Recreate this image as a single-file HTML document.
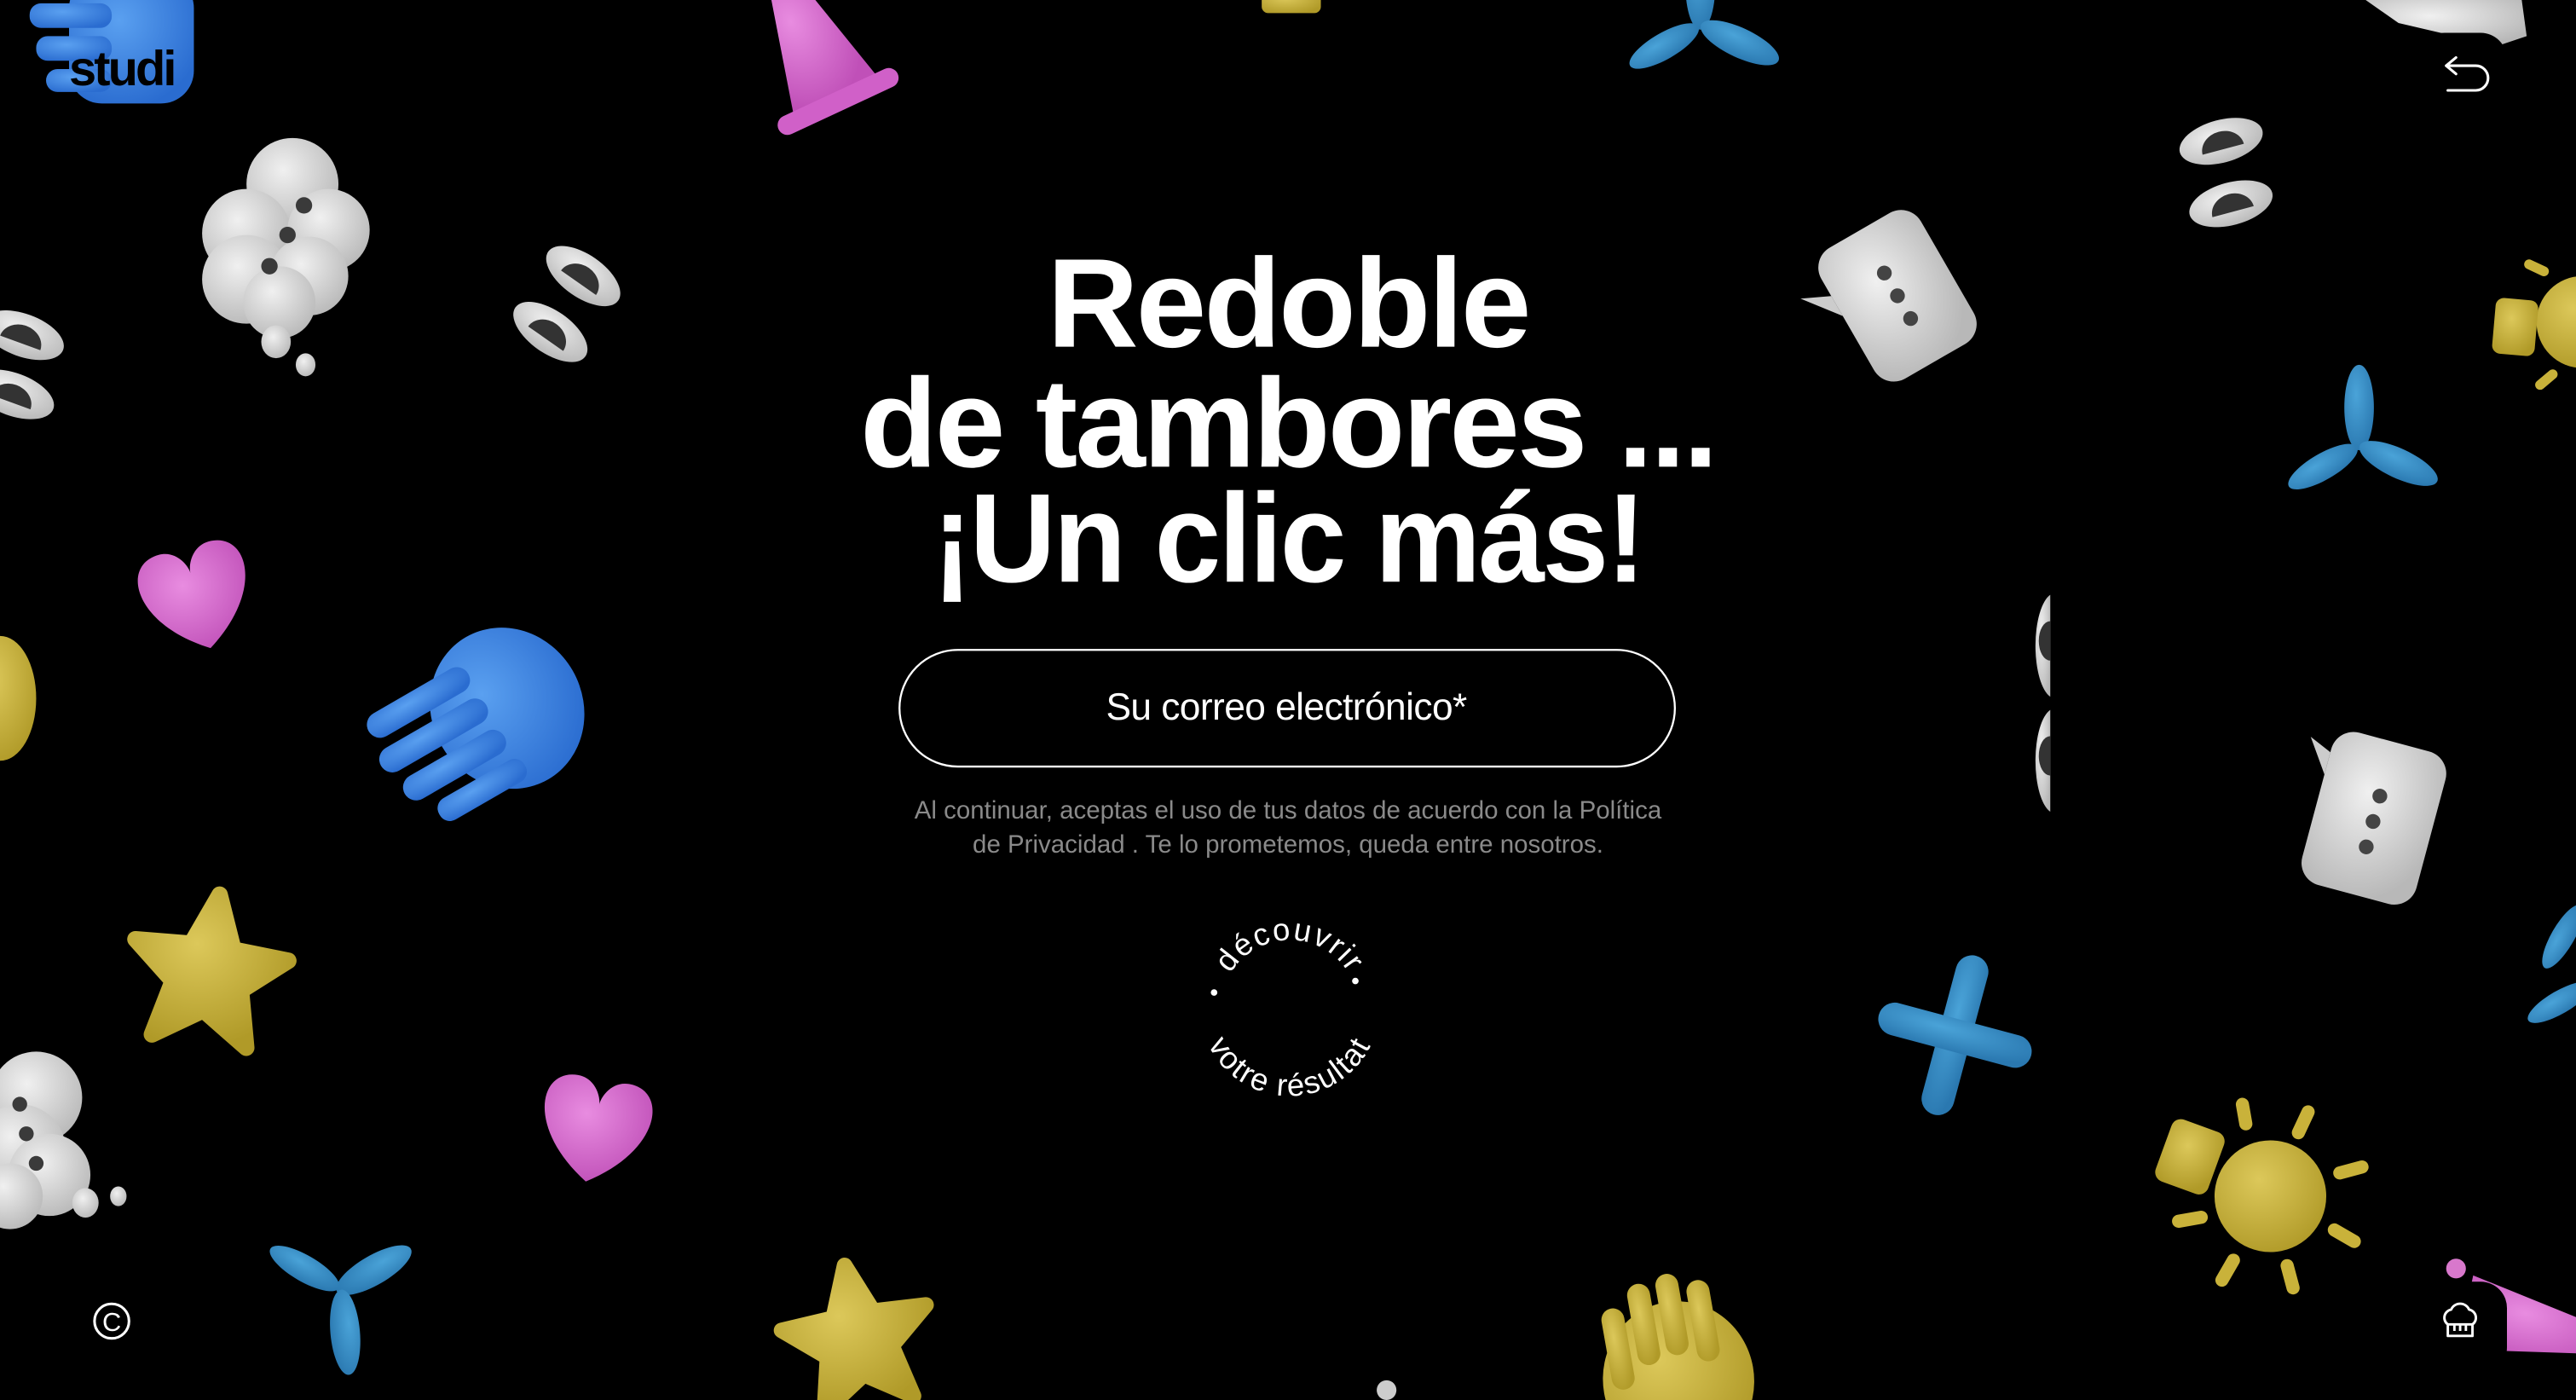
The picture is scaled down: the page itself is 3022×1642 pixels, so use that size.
<!DOCTYPE html>
<html><head><meta charset="utf-8"><style>
html,body{margin:0;padding:0;background:#000;overflow:hidden;width:3022px;height:1642px}
svg{display:block;overflow:hidden}
</style></head><body>
<svg width="3022" height="1642" viewBox="0 0 1568 852" overflow="hidden" xmlns="http://www.w3.org/2000/svg">
<defs>
<radialGradient id="w" cx="40%" cy="35%" r="70%"><stop offset="0" stop-color="#f0f0f0"/><stop offset="1" stop-color="#b8b8b8"/></radialGradient>
<radialGradient id="b" cx="40%" cy="35%" r="70%"><stop offset="0" stop-color="#5aa0f0"/><stop offset="1" stop-color="#2a6cd0"/></radialGradient>
<radialGradient id="t" cx="40%" cy="35%" r="70%"><stop offset="0" stop-color="#4aa3d8"/><stop offset="1" stop-color="#2a78b0"/></radialGradient>
<radialGradient id="p" cx="40%" cy="35%" r="70%"><stop offset="0" stop-color="#e88ce0"/><stop offset="1" stop-color="#c050b8"/></radialGradient>
<radialGradient id="y" cx="40%" cy="35%" r="70%"><stop offset="0" stop-color="#dcc85a"/><stop offset="1" stop-color="#b09a28"/></radialGradient>
<g id="eye"><ellipse rx="26" ry="13" fill="url(#w)"/><path d="M-13,5 a13 11 0 0 1 26 0 z" fill="#333"/></g>
<g id="heart"><path d="M0,30 C-40,5 -38,-30 -15,-30 C-5,-30 0,-20 0,-15 C0,-20 5,-30 15,-30 C38,-30 40,5 0,30 Z" fill="url(#p)"/></g>
<g id="star"><path d="M0,-48 L13,-16 L47,-14 L21,8 L29,42 L0,23 L-29,42 L-21,8 L-47,-14 L-13,-16 Z" fill="url(#y)" stroke="url(#y)" stroke-width="10" stroke-linejoin="round"/></g>
<g id="sprout" fill="url(#t)"><ellipse cx="0" cy="-26" rx="9" ry="26"/><ellipse cx="24" cy="8" rx="26" ry="9" transform="rotate(25 24 8)"/><ellipse cx="-22" cy="10" rx="24" ry="8" transform="rotate(-30 -22 10)"/></g>
</defs>
<rect width="1568" height="852" fill="#000"/>

<g fill="url(#b)"><rect x="42" y="-15" width="76" height="78" rx="20"/><rect x="18" y="2" width="50" height="15" rx="7"/><rect x="22" y="22" width="46" height="15" rx="7"/><rect x="28" y="42" width="40" height="14" rx="7"/></g>
<text x="42" y="52" font-family="Liberation Sans, sans-serif" font-weight="bold" font-size="30" letter-spacing="-1.5" fill="#000">studi</text>

<g transform="translate(500,40) rotate(-25)"><path d="M-8,-60 L8,-60 L28,20 L-28,20 Z" fill="url(#p)"/><rect x="-40" y="18" width="80" height="12" rx="6" fill="#d060c8"/></g>
<rect x="768" y="-6" width="36" height="14" rx="4" fill="url(#y)"/>
<g transform="translate(1035,18)"><use href="#sprout"/></g>

<g fill="url(#w)"><circle cx="178" cy="112" r="28"/><circle cx="150" cy="142" r="27"/><circle cx="200" cy="140" r="25"/><circle cx="150" cy="170" r="27"/><circle cx="188" cy="168" r="24"/><circle cx="170" cy="184" r="22"/><ellipse cx="168" cy="208" rx="9" ry="10"/><ellipse cx="186" cy="222" rx="6" ry="7"/></g>
<g fill="#3a3a3a"><circle cx="185" cy="125" r="5"/><circle cx="175" cy="143" r="5"/><circle cx="164" cy="162" r="5"/></g>

<use href="#eye" transform="translate(355,168) rotate(35)"/>
<use href="#eye" transform="translate(335,202) rotate(35)"/>
<use href="#eye" transform="translate(14,204) rotate(20)"/>
<use href="#eye" transform="translate(8,240) rotate(20)"/>
<use href="#eye" transform="translate(1352,86) rotate(-15)"/>
<use href="#eye" transform="translate(1358,124) rotate(-15)"/>

<g transform="translate(1155,180) rotate(-30)"><rect x="-35" y="-46" width="70" height="92" rx="14" fill="url(#w)"/><path d="M-35,-20 L-52,-28 L-35,-6 Z" fill="#ccc"/><g fill="#444"><circle cx="0" cy="-16" r="4.5"/><circle cx="0" cy="0" r="4.5"/><circle cx="0" cy="16" r="4.5"/></g></g>
<g transform="translate(1445,498) rotate(15)"><rect x="-36" y="-48" width="72" height="96" rx="14" fill="url(#w)"/><path d="M-36,-32 L-50,-38 L-36,-18 Z" fill="#ccc"/><g fill="#444"><circle cx="0" cy="-14" r="4.5"/><circle cx="0" cy="2" r="4.5"/><circle cx="0" cy="18" r="4.5"/></g></g>

<circle cx="1572" cy="196" r="28" fill="url(#y)"/>
<rect x="1518" y="182" width="26" height="34" rx="5" fill="url(#y)" transform="rotate(5 1531 199)"/>
<rect x="1536" y="160" width="16" height="6" rx="3" fill="#c9b23a" transform="rotate(25 1544 163)"/>
<rect x="1542" y="228" width="16" height="6" rx="3" fill="#c9b23a" transform="rotate(-40 1550 231)"/>

<g transform="translate(1436,274)"><use href="#sprout"/></g>
<use href="#heart" transform="translate(120,364) rotate(-15) scale(1.05)"/>
<ellipse cx="0" cy="425" rx="22" ry="38" fill="url(#y)"/>

<g transform="translate(300,436) rotate(-30)" fill="url(#b)"><ellipse cx="10" cy="0" rx="46" ry="50"/><rect x="-70" y="-38" width="70" height="16" rx="8"/><rect x="-74" y="-16" width="74" height="16" rx="8"/><rect x="-70" y="6" width="70" height="16" rx="8"/><rect x="-58" y="28" width="60" height="15" rx="7"/></g>

<g fill="url(#w)"><path d="M1248,362 a12 32 0 0 0 0 62 z"/><path d="M1248,432 a12 32 0 0 0 0 62 z"/></g>
<g fill="#333"><path d="M1248,378 a7 12 0 0 0 0 24 z"/><path d="M1248,448 a7 12 0 0 0 0 24 z"/></g>

<use href="#star" transform="translate(127,592) rotate(8)"/>
<g transform="translate(1190,630) rotate(15)" fill="url(#t)"><rect x="-10" y="-50" width="20" height="100" rx="10"/><rect x="-48" y="-10" width="96" height="20" rx="10"/></g>
<g transform="translate(1568,592)"><ellipse cx="-8" cy="-22" rx="22" ry="7" transform="rotate(-60 -8 -22)" fill="url(#t)"/><ellipse cx="-10" cy="18" rx="22" ry="7" transform="rotate(-30 -10 18)" fill="url(#t)"/></g>

<g fill="url(#w)"><circle cx="22" cy="668" r="28"/><circle cx="12" cy="700" r="28"/><circle cx="30" cy="715" r="25"/><circle cx="6" cy="728" r="20"/><ellipse cx="52" cy="732" rx="8" ry="9"/><ellipse cx="72" cy="728" rx="5" ry="6"/></g>
<g fill="#3a3a3a"><circle cx="12" cy="672" r="4.5"/><circle cx="16" cy="690" r="4.5"/><circle cx="22" cy="708" r="4.5"/></g>

<use href="#heart" transform="translate(362,688) rotate(10) scale(1.05)"/>
<g transform="translate(205,786) rotate(60)"><use href="#sprout"/></g>
<use href="#star" transform="translate(522,815) rotate(-10) scale(0.95)"/>
<g transform="translate(1020,830) rotate(-10)" fill="url(#y)"><ellipse cx="0" cy="10" rx="46" ry="48"/><rect x="-40" y="-40" width="14" height="50" rx="7"/><rect x="-22" y="-52" width="14" height="50" rx="7"/><rect x="-4" y="-55" width="14" height="50" rx="7"/><rect x="14" y="-48" width="14" height="50" rx="7"/></g>
<circle cx="844" cy="846" r="6" fill="#ccc"/>

<circle cx="1382" cy="728" r="34" fill="url(#y)"/>
<g fill="#c9b23a">
<rect x="1398" y="672" width="8" height="22" rx="4" transform="rotate(25 1402 683)"/>
<rect x="1420" y="708" width="22" height="8" rx="4" transform="rotate(-15 1431 712)"/>
<rect x="1416" y="748" width="22" height="8" rx="4" transform="rotate(30 1427 752)"/>
<rect x="1390" y="766" width="8" height="22" rx="4" transform="rotate(-15 1394 777)"/>
<rect x="1352" y="762" width="8" height="22" rx="4" transform="rotate(30 1356 773)"/>
<rect x="1322" y="738" width="22" height="8" rx="4" transform="rotate(-10 1333 742)"/>
<rect x="1362" y="668" width="8" height="20" rx="4" transform="rotate(-10 1366 678)"/>
</g>
<rect x="1316" y="684" width="34" height="40" rx="6" fill="url(#y)" transform="rotate(20 1333 704)"/>

<path d="M1440,0 L1535,0 L1538,22 L1520,28 L1460,14 Z" fill="url(#w)"/>
<rect x="1472" y="20" width="54" height="70" rx="16" fill="#000"/>
<path d="M1489,40 H1507 A5 5 0 0 1 1507,55 H1490 M1489,40 L1495,35 M1489,40 L1495,45" fill="none" stroke="#fff" stroke-width="1.6" stroke-linecap="round" stroke-linejoin="round"/>

<g transform="translate(1540,806) rotate(12)"><path d="M-40,-22 L50,-6 L50,8 L-40,24 Z" fill="url(#p)"/></g>
<ellipse cx="1495" cy="772" rx="6" ry="6" fill="#d878cc"/>
<rect x="1472" y="780" width="54" height="56" rx="16" fill="#000"/>
<path d="M1490,806 A5 5 0 0 1 1492,797 A6 6 0 0 1 1503,797 A5 5 0 0 1 1505,806 Z M1490,806 V813 H1505 V806 M1494,806 V810 M1497.5,806 V810 M1501,806 V810" fill="none" stroke="#fff" stroke-width="1.5" stroke-linejoin="round"/>

<circle cx="68" cy="804" r="10.5" fill="none" stroke="#fff" stroke-width="1.6"/>
<text x="68" y="810" text-anchor="middle" font-family="Liberation Sans, sans-serif" font-size="16" fill="#fff">C</text>

<g font-family="Liberation Sans, sans-serif" font-weight="bold" font-size="77" fill="#fff" text-anchor="middle" letter-spacing="-1.5">
<text x="784" y="211">Redoble</text>
<text x="784" y="284">de tambores ...</text>
<text x="784" y="354" textLength="433" lengthAdjust="spacingAndGlyphs">¡Un clic más!</text>
</g>

<rect x="547.5" y="395.5" width="472" height="71" rx="35.5" fill="#000" stroke="#fff" stroke-width="1.2"/>
<text x="783" y="438" text-anchor="middle" font-family="Liberation Sans, sans-serif" font-size="23" fill="#fff" letter-spacing="-0.3">Su correo electrónico*</text>
<g font-family="Liberation Sans, sans-serif" font-size="15.3" fill="#8a8a8a" text-anchor="middle">
<text x="784" y="498">Al continuar, aceptas el uso de tus datos de acuerdo con la Política</text>
<text x="784" y="519">de Privacidad . Te lo prometemos, queda entre nosotros.</text>
</g>

<path id="arcT" d="M743,614 A42 42 0 0 1 827,614" fill="none"/>
<path id="arcB" d="M730,612 A55 55 0 0 0 840,612" fill="none"/>
<g font-family="Liberation Sans, sans-serif" font-size="19" fill="#fff" letter-spacing="1">
<text text-anchor="middle"><textPath href="#arcT" startOffset="50%">découvrir</textPath></text>
<text text-anchor="middle"><textPath href="#arcB" startOffset="50%">votre résultat</textPath></text>
</g>
<circle cx="739" cy="604" r="2" fill="#fff"/>
<circle cx="825" cy="597" r="2" fill="#fff"/>
</svg>
</body></html>
